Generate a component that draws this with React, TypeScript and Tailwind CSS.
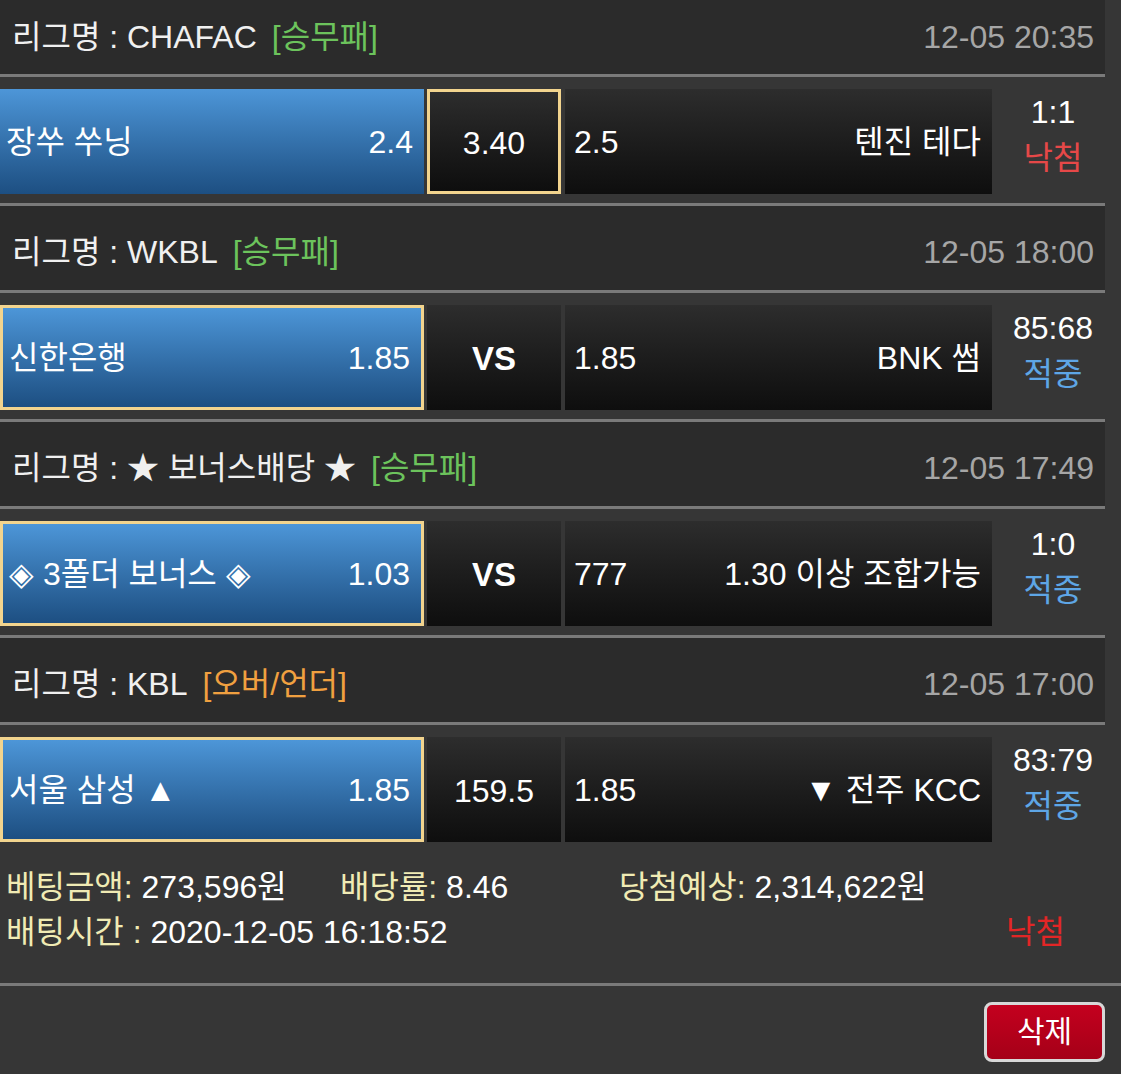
import React from "react";

type Pick = "home" | "draw";

interface Match {
  league: string;
  kind: string;
  kindColor: string;
  date: string;
  home: string;
  homeOdds: string;
  mid: string;
  midBold?: boolean;
  away: string;
  awayOdds: string;
  pick: Pick;
  score: string;
  result: string;
  resultColor: string;
}

const matches: Match[] = [
  {
    league: "리그명 : CHAFAC",
    kind: "[승무패]",
    kindColor: "text-[#6cc35c]",
    date: "12-05 20:35",
    home: "장쑤 쑤닝",
    homeOdds: "2.4",
    mid: "3.40",
    away: "텐진 테다",
    awayOdds: "2.5",
    pick: "draw",
    score: "1:1",
    result: "낙첨",
    resultColor: "text-[#e64848]",
  },
  {
    league: "리그명 : WKBL",
    kind: "[승무패]",
    kindColor: "text-[#6cc35c]",
    date: "12-05 18:00",
    home: "신한은행",
    homeOdds: "1.85",
    mid: "VS",
    midBold: true,
    away: "BNK 썸",
    awayOdds: "1.85",
    pick: "home",
    score: "85:68",
    result: "적중",
    resultColor: "text-[#5ea6e6]",
  },
  {
    league: "리그명 : ★ 보너스배당 ★",
    kind: "[승무패]",
    kindColor: "text-[#6cc35c]",
    date: "12-05 17:49",
    home: "◈ 3폴더 보너스 ◈",
    homeOdds: "1.03",
    mid: "VS",
    midBold: true,
    away: "1.30 이상 조합가능",
    awayOdds: "777",
    pick: "home",
    score: "1:0",
    result: "적중",
    resultColor: "text-[#5ea6e6]",
  },
  {
    league: "리그명 : KBL",
    kind: "[오버/언더]",
    kindColor: "text-[#f0a040]",
    date: "12-05 17:00",
    home: "서울 삼성 ▲",
    homeOdds: "1.85",
    mid: "159.5",
    away: "▼ 전주 KCC",
    awayOdds: "1.85",
    pick: "home",
    score: "83:79",
    result: "적중",
    resultColor: "text-[#5ea6e6]",
  },
];

const gold = "border-[3px] border-[#f2d48e]";
const dark = "bg-linear-to-b from-[#2d2d2d] to-[#0e0e0e]";

function MatchBlock({ m, first, last }: { m: Match; first: boolean; last: boolean }) {
  return (
    <div>
      <div
        className={`w-[1105px] bg-[#2b2b2b] flex items-center justify-between pl-[12px] pr-[11px] ${
          first ? "h-[74px]" : "h-[84px] pt-[8px]"
        }`}
      >
        <div className="flex items-center">
          <span className="text-[#f0f0f0]">{m.league}</span>
          <span className={`ml-[15px] ${m.kindColor}`}>{m.kind}</span>
        </div>
        <span className="text-[#a6a6a6]">{m.date}</span>
      </div>
      <div className="w-[1105px] h-[3px] bg-[#7a7a7a]" />

      <div className="flex pt-[12px] pb-[9px]">
        <div
          className={`w-[424px] h-[105px] flex items-center justify-between pl-[6px] pr-[11px] text-white bg-linear-to-b from-[#4d96d8] to-[#1d4f82] ${
            m.pick === "home" ? gold : ""
          }`}
        >
          <span>{m.home}</span>
          <span>{m.homeOdds}</span>
        </div>
        <div
          className={`ml-[3px] w-[134px] h-[105px] flex items-center justify-center pt-[3px] text-white ${dark} ${
            m.pick === "draw" ? gold : ""
          } ${m.midBold ? "font-bold text-[33px]" : ""}`}
        >
          {m.mid}
        </div>
        <div
          className={`ml-[4px] w-[427px] h-[105px] flex items-center justify-between pl-[9px] pr-[11px] text-white ${dark}`}
        >
          <span>{m.awayOdds}</span>
          <span>{m.away}</span>
        </div>
        <div className="flex-1 h-[105px] flex flex-col items-center justify-center pr-[7px] pb-[14px] leading-[46px]">
          <span className="text-white">{m.score}</span>
          <span className={m.resultColor}>{m.result}</span>
        </div>
      </div>

      {!last && <div className="w-[1105px] h-[3px] bg-[#7a7a7a]" />}
    </div>
  );
}

export default function App() {
  return (
    <div className="w-[1121px] h-[1074px] overflow-hidden bg-[#363636] text-[32px] leading-[36px] font-['Liberation_Sans','Noto_Sans_CJK_KR',sans-serif]">
      {matches.map((m, i) => (
        <MatchBlock key={i} m={m} first={i === 0} last={i === matches.length - 1} />
      ))}

      <div className="pt-[14px] pb-[28px] pl-[6px] leading-[45px]">
        <div className="flex">
          <div className="w-[334px]">
            <span className="text-[#f0ebb4]">베팅금액: </span>
            <span className="text-white">273,596원</span>
          </div>
          <div className="w-[279px]">
            <span className="text-[#f0ebb4]">배당률: </span>
            <span className="text-white">8.46</span>
          </div>
          <div>
            <span className="text-[#f0ebb4]">당첨예상: </span>
            <span className="text-white">2,314,622원</span>
          </div>
        </div>
        <div className="flex justify-between pr-[56px]">
          <div>
            <span className="text-[#f0ebb4]">배팅시간 : </span>
            <span className="text-white">2020-12-05 16:18:52</span>
          </div>
          <span className="text-[#e22626]">낙첨</span>
        </div>
      </div>
      <div className="h-[3px] bg-[#7a7a7a]" />

      <div className="flex justify-end pt-[16px] pr-[16px]">
        <button className="w-[121px] h-[60px] rounded-[8px] border-[3px] border-[#d8d8d8] bg-linear-to-b from-[#c4001e] to-[#a50018] text-white text-[30px] leading-none">
          삭제
        </button>
      </div>
    </div>
  );
}
